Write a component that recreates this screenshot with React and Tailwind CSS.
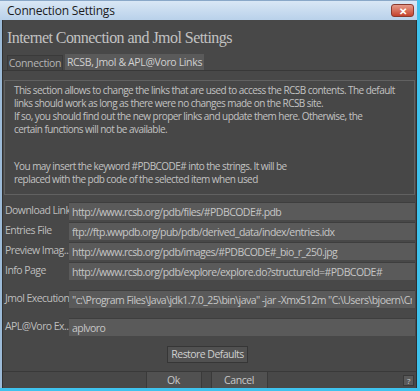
import { useState } from 'react';

const ui = { fontFamily: '"Open Sans", "Liberation Sans", sans-serif' };

const fields = [
  { label: 'Download Link', value: 'http://www.rcsb.org/pdb/files/#PDBCODE#.pdb' },
  { label: 'Entries File', value: 'ftp://ftp.wwpdb.org/pub/pdb/derived_data/index/entries.idx' },
  { label: 'Preview Imag...', value: 'http://www.rcsb.org/pdb/images/#PDBCODE#_bio_r_250.jpg' },
  { label: 'Info Page', value: 'http://www.rcsb.org/pdb/explore/explore.do?structureId=#PDBCODE#' },
];

const intro = [
  'This section allows to change the links that are used to access the RCSB contents. The default',
  'links should work as long as there were no changes made on the RCSB site.',
  'If so, you should find out the new proper links and update them here. Otherwise, the',
  'certain functions will not be available.',
];

function Field({ label, value, onChange }) {
  return (
    <div className="flex items-center h-[18px]">
      <div className="w-[66px] shrink-0 pl-[2px] whitespace-nowrap text-[10.5px] tracking-[-0.55px] text-[#bdbdbd]">{label}</div>
      <input
        value={value}
        onChange={onChange}
        className="flex-1 h-[18px] min-w-0 bg-[#5a5a5a] border-t border-[#3e3e3e] px-[3px] text-[10.5px] tracking-[-0.55px] text-[#c6c6c6] outline-none"
      />
    </div>
  );
}

export default function App() {
  const [tab, setTab] = useState(1);
  const [apl, setApl] = useState('aplvoro');

  return (
    <div className="w-[420px] h-[391px] bg-[#3fc3ee] overflow-hidden" style={ui}>
      <div className="flex flex-col h-[388px] w-[417px] border-l-[2px] border-[#9dbbd8] bg-[#484848]">
        {/* title bar */}
        <div className="h-[20px] flex items-center justify-between bg-gradient-to-b from-[#d9e7f5] to-[#b9d1ea] border-t border-[#8aa8c8] -ml-[2px] pl-[7px] pr-[3px]">
          <span className="text-[12px] text-[#1c1c1c] tracking-[-0.2px]">Connection Settings</span>
          <button className="w-[23px] h-[13px] rounded-[3px] border border-[#8a3a2e] bg-gradient-to-b from-[#e59a8a] to-[#c4412c] flex items-center justify-center text-white text-[10px] font-bold leading-none">
            ✕
          </button>
        </div>

        <div className="flex-1 flex flex-col border-l border-[#303030] border-r border-r-[#303030]">
          <h1
            className="h-[35px] flex items-center pl-[4px] pt-[1px] text-[16px] text-[#c2c2c2] tracking-[-0.55px]"
            style={{ fontFamily: '"Liberation Serif", serif' }}
          >
            Internet Connection and Jmol Settings
          </h1>

          {/* tabs */}
          <div className="flex items-end h-[16px] pl-[4px] border-b border-[#383838] text-[10.5px] tracking-[-0.35px]">
            <button
              onClick={() => setTab(0)}
              className={`h-[15px] w-[56px] mr-[2px] leading-[15px] ${tab === 0 ? 'bg-[#5a5a5a] text-[#d0d0d0]' : 'bg-[#444] text-[#b4b4b4] border-t border-x border-[#3a3a3a]'}`}
            >
              Connection
            </button>
            <button
              onClick={() => setTab(1)}
              className={`h-[16px] w-[139px] leading-[16px] ${tab === 1 ? 'bg-[#5a5a5a] text-[#d0d0d0]' : 'bg-[#444] text-[#b4b4b4]'}`}
            >
              RCSB, Jmol &amp; APL@Voro Links
            </button>
          </div>

          <div className="flex-1 flex flex-col pt-[9px] text-[10.5px] tracking-[-0.45px]">
            <div className="mx-[1px] h-[115px] border border-[#616161] bg-[#474747] pl-[9px] pt-[3px] text-[10px] tracking-[-0.55px] text-[#c2c2c2] leading-[13px] whitespace-nowrap overflow-hidden">
              {intro.map((line) => (
                <div key={line}>{line}</div>
              ))}
              <div className="mt-[24px]">You may insert the keyword #PDBCODE# into the strings. It will be</div>
              <div>replaced with the pdb code of the selected item when used</div>
            </div>

            <div className="flex flex-col gap-[2px] mt-[7px] pr-[1px]">
              {fields.map((f) => (
                <Field key={f.label} label={f.label} value={f.value} onChange={() => {}} />
              ))}
            </div>
            <div className="mt-[10px] pr-[1px]">
              <Field
                label="Jmol Execution"
                value={'"c:\\Program Files\\Java\\jdk1.7.0_25\\bin\\java" -jar -Xmx512m "C:\\Users\\bjoern\\Cn'}
                onChange={() => {}}
              />
            </div>
            <div className="mt-[10px] pr-[1px]">
              <Field label="APL@Voro Ex..." value={apl} onChange={(e) => setApl(e.target.value)} />
            </div>

            <div className="flex justify-center mt-[10px] pr-[4px]">
              <button className="h-[17px] px-[3px] whitespace-nowrap bg-[#515151] border border-[#363636] text-[#cfcfcf] tracking-[-0.55px] leading-[15px]">
                Restore Defaults
              </button>
            </div>

            <div className="mt-auto relative flex justify-center gap-[9px] h-[17px] border-t border-[#393939] pr-[6px]">
              <button className="w-[56px] h-[16px] bg-[#515151] border-x border-[#3a3a3a] text-[#c8c8c8] leading-[16px]">
                Ok
              </button>
              <button className="w-[57px] h-[16px] bg-[#515151] border-x border-[#3a3a3a] text-[#c8c8c8] leading-[16px]">
                Cancel
              </button>
              <button className="absolute right-[2px] top-[3px] w-[11px] h-[11px] bg-[#5a5a5a] border border-[#3a3a3a] text-[8px] text-[#cfcfcf] leading-[9px]">
                ?
              </button>
            </div>
          </div>
        </div>
      </div>
    </div>
  );
}
